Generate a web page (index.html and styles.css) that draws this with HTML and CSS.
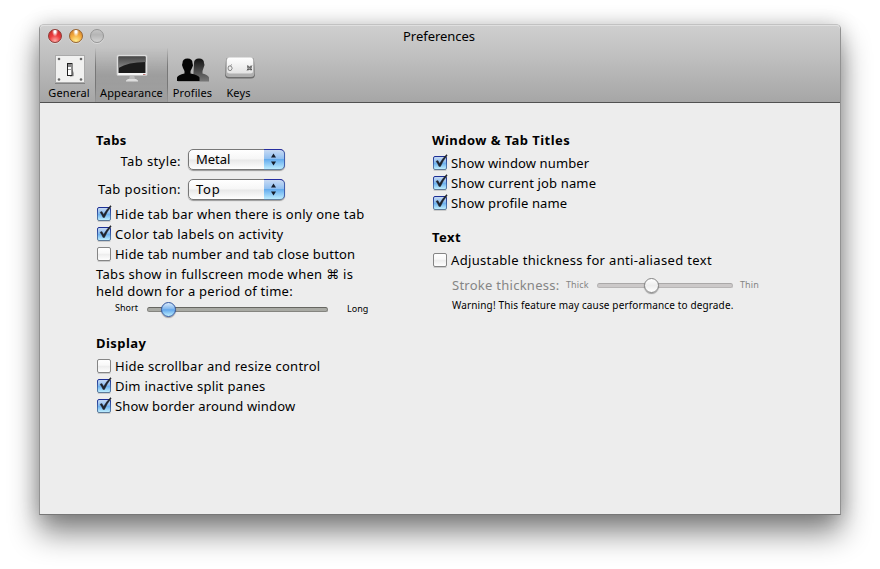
FILE: index.html
```html
<!DOCTYPE html>
<html lang="en">
<head>
<meta charset="utf-8">
<title>Preferences</title>
<link rel="stylesheet" href="styles.css">
</head>
<body>
<svg class="defs" width="0" height="0" aria-hidden="true">
  <defs>
    <linearGradient id="blue" x1="0" y1="0" x2="0" y2="1"><stop offset="0" stop-color="#cbdcf3"/><stop offset=".45" stop-color="#8bbdf0"/><stop offset=".5" stop-color="#68aeed"/><stop offset="1" stop-color="#c4f2ff"/></linearGradient>
    <linearGradient id="blueEdge" x1="0" y1="0" x2="0" y2="1"><stop offset="0" stop-color="#1d2f94"/><stop offset=".7" stop-color="#4771ad"/><stop offset="1" stop-color="#5e7a98"/></linearGradient>
    <linearGradient id="white" x1="0" y1="0" x2="0" y2="1"><stop offset="0" stop-color="#fff"/><stop offset=".45" stop-color="#f8f8f8"/><stop offset=".5" stop-color="#ececec"/><stop offset="1" stop-color="#fff"/></linearGradient>
    <linearGradient id="screen" x1="0" y1="0" x2="0" y2="1"><stop offset="0" stop-color="#484848"/><stop offset="1" stop-color="#858585"/></linearGradient>
    <linearGradient id="fade" x1="0" y1="0" x2="0" y2="1"><stop offset="0" stop-color="#111"/><stop offset="1" stop-color="#777"/></linearGradient>
    <linearGradient id="key" x1="0" y1="0" x2="0" y2="1"><stop offset="0" stop-color="#fff"/><stop offset="1" stop-color="#e3e3e3"/></linearGradient>
    <symbol id="on" viewBox="0 0 16 18">
      <rect x="1.5" y="15" width="13" height="2" rx="1" fill="#aaa" opacity=".5"/>
      <rect x="1.5" y="2.500" width="13" height="13" rx="1.500" fill="url(#blue)" stroke="url(#blueEdge)"/>
      <path d="M4 7.200 5.900 6.500 7.600 9.500Q10.500 4.500 14.500.500L15.200 1.500Q11 6.500 8.500 12.500H7Q5.800 9.500 4 7.200Z" fill="#20242c" stroke="#20242c" stroke-width=".4"/>
    </symbol>
    <symbol id="off" viewBox="0 0 16 18">
      <rect x="1.500" y="15" width="13" height="2" rx="1" fill="#aaa" opacity=".5"/>
      <rect x="1.500" y="2.500" width="13" height="13" rx="1.500" fill="url(#white)" stroke="#858585"/>
    </symbol>
  </defs>
</svg>
<main class="window">
  <header class="chrome">
    <div class="titlebar">
      <div class="lights"><i class="light red"></i><i class="light amber"></i><i class="light idle"></i></div>
      <h1 class="title">Preferences</h1>
    </div>
    <nav class="toolbar">
      <div class="tool general">
        <svg width="32" height="32" viewBox="0 0 32 32">
          <rect x="2" y="3" width="30" height="28" fill="#666" opacity=".6"/>
          <rect x="2.500" y="2.500" width="29" height="27" fill="#f1f1f0" stroke="#aaa"/>
          <g fill="#666"><circle cx="6" cy="6" r="1.300"/><circle cx="28" cy="6" r="1.300"/><circle cx="6" cy="26.500" r="1.300"/><circle cx="28" cy="26.500" r="1.300"/></g>
          <path d="M18 14 21 20V23L17 24Z" fill="#aaa"/>
          <rect x="14.500" y="10.500" width="4.500" height="12" fill="#fff" stroke="#222"/>
          <path d="M15 11H18.500V14H15Z" fill="#888"/><path d="M15 16.500H18.500" stroke="#999"/>
        </svg><span>General</span>
      </div>
      <div class="tool appearance">
        <svg width="32" height="32" viewBox="0 0 32 32">
          <path d="M14 22H18L19 26H13Z" fill="#bbb"/>
          <path d="M10 27.500 12 26H20L22 27.500V28.500H10Z" fill="#ddd"/>
          <rect x="1" y="2" width="30" height="20.500" rx="1" fill="#f5f5f5" stroke="#c5c5c5"/>
          <rect x="2.500" y="3.500" width="27" height="16.500" fill="#1b1b1b"/>
          <path d="M2.500 3.500H29.500V9Q12 9 2.500 15Z" fill="url(#screen)"/>
          <path d="M27 21.500H29.500" stroke="#b77"/>
        </svg><span>Appearance</span>
      </div>
      <div class="tool profiles">
        <svg width="34" height="32" viewBox="0 0 34 32">
          <path d="M2 28.500H33" stroke="#777" opacity=".5"/>
          <path d="M18 10Q18 5.500 23 5.500T28 10L28.500 12 27.500 15 26.500 18V20.500Q32 22 33 24.500V28H17Z" fill="url(#fade)"/>
          <path d="M6.500 10Q6.500 5.500 11.500 5.500T16.500 10L17 12.500 16 15 14.500 18V20.500Q22 22 23.500 24.500V28H1V24.500Q2 22 8.500 20.500V18L7 15 6 12Z" fill="#050505"/>
        </svg><span>Profiles</span>
      </div>
      <div class="tool keys">
        <svg width="32" height="32" viewBox="0 0 32 32">
          <path d="M3 7Q3 5 5 5H29Q31 5 31 7L32 21Q32 25.500 28 25.500H6Q2 25.500 2 21Z" fill="#6d6d6d"/>
          <path d="M3 7Q3 5 5 5H29Q31 5 31 7L31.500 20Q31.500 24 28 24H6Q2.500 24 2.500 20Z" fill="#b0b0b0"/>
          <rect x="4" y="4.500" width="26" height="16" rx="2.500" fill="url(#key)"/>
          <path d="M7.500 12.500Q8.500 12.500 8.500 11.500M8 13Q5 12 5 15T7 17.500H8Q10.500 15 8 13Z" fill="none" stroke="#888"/>
          <path d="M24 12.500 29 17M29 12.500 24 17.500M25 12.500V17.500M28 12.500V17.500M24 14H29M24 16.500H29" stroke="#555" stroke-width=".8"/>
        </svg><span>Keys</span>
      </div>
    </nav>
  </header>
  <div class="content">
    <section class="column left">
      <h2 class="head h-tabs">Tabs</h2>
      <div class="row popup-row style-row"><span class="label">Tab style:</span><div class="popup"><span class="value">Metal</span><span class="arrows"><svg width="20" height="19" viewBox="0 0 20 19"><path d="M7 7.500H12L9.500 3.500ZM7 11.500H12L9.500 15.500Z" fill="#151d2b"/></svg></span></div></div>
      <div class="row popup-row position-row"><span class="label">Tab position:</span><div class="popup"><span class="value top">Top</span><span class="arrows"><svg width="20" height="19" viewBox="0 0 20 19"><path d="M7 7.500H12L9.500 3.500ZM7 11.500H12L9.500 15.500Z" fill="#151d2b"/></svg></span></div></div>
      <div class="row check"><svg><use href="#on"/></svg><span class="t-hidebar">Hide tab bar when there is only one tab</span></div>
      <div class="row check"><svg><use href="#on"/></svg><span class="t-color">Color tab labels on activity</span></div>
      <div class="row check"><svg><use href="#off"/></svg><span class="t-number">Hide tab number and tab close button</span></div>
      <p class="note"><span class="t-note1">Tabs show in fullscreen mode when <span class="cmd">⌘</span> is</span><br><span class="t-note2">held down for a period of time:</span></p>
      <div class="row slider-row delay"><span class="mini short">Short</span><div class="track"><i class="knob"></i></div><span class="mini long">Long</span></div>
      <h2 class="head h-display">Display</h2>
      <div class="row check"><svg><use href="#off"/></svg><span class="t-scroll">Hide scrollbar and resize control</span></div>
      <div class="row check"><svg><use href="#on"/></svg><span class="t-dim">Dim inactive split panes</span></div>
      <div class="row check"><svg><use href="#on"/></svg><span class="t-border">Show border around window</span></div>
    </section>
    <section class="column right">
      <h2 class="head h-titles">Window &amp; Tab Titles</h2>
      <div class="row check"><svg><use href="#on"/></svg><span class="t-winnum">Show window number</span></div>
      <div class="row check"><svg><use href="#on"/></svg><span class="t-job">Show current job name</span></div>
      <div class="row check"><svg><use href="#on"/></svg><span class="t-profile">Show profile name</span></div>
      <h2 class="head h-text">Text</h2>
      <div class="row check"><svg><use href="#off"/></svg><span class="t-adjust">Adjustable thickness for anti-aliased text</span></div>
      <div class="row slider-row stroke"><span class="stroke-label">Stroke thickness:</span><span class="mini thick">Thick</span><div class="track"><i class="knob"></i></div><span class="mini thin">Thin</span></div>
      <p class="warning">Warning! This feature may cause performance to degrade.</p>
    </section>
  </div>
</main>
</body>
</html>
```
FILE: styles.css
```css
* { box-sizing: border-box; }
html, body { margin: 0; height: 569px; overflow: hidden; background: #fff; }
body {
  padding: 24px 39px;
  font: 13px/20px "Noto Sans", "DejaVu Sans", sans-serif;
  color: #000;
}
.defs { position: absolute; }
h1, h2, p { margin: 0; }
.window {
  width: 802px;
  height: 491px;
  border: 1px solid #929292;
  border-top-color: #c2c2c2;
  border-bottom-color: #777;
  border-radius: 5px 5px 0 0;
  background: #ededed;
  box-shadow: 0 18px 30px rgba(0, 0, 0, .48), 0 0 20px rgba(0, 0, 0, .18);
}
.chrome {
  height: 78px;
  border-bottom: 1px solid #515151;
  border-radius: 4px 4px 0 0;
  background: linear-gradient(#cfcfcf, #c4c4c4 30%, #a6a6a6);
  box-shadow: inset 0 1px #e0e0e0;
}
.titlebar { display: grid; grid-template-columns: 1fr auto 1fr; height: 23px; align-items: center; }
.lights { display: flex; gap: 7px; padding: 0 0 1px 8px; }
.light { width: 14px; height: 14px; border-radius: 50%; border: 1px solid #777; box-shadow: 0 1px rgba(255, 255, 255, .35); }
.red { border-color: #8f3934; background: radial-gradient(ellipse at 50% 12%, #fff 0 10%, transparent 35%), radial-gradient(circle at 50% 90%, #ffaaa5, #ed3e40 45%, #bd2527); }
.amber { border-color: #966330; background: radial-gradient(ellipse at 50% 12%, #fff 0 10%, transparent 35%), radial-gradient(circle at 50% 90%, #ffee90, #f4ab3e 50%, #c57423); }
.idle { border-color: #969696; background: linear-gradient(#c5c5c5, #b5b5b5 40%, #d2d2d2); }
.title { font-size: 13px; font-weight: 400; line-height: 23px; letter-spacing: -.03px; padding-right: 2px; }
.toolbar { display: flex; height: 54px; padding-left: 3px; }
.tool { display: flex; flex-direction: column; align-items: center; padding-top: 5px; font-size: 11px; line-height: 14px; letter-spacing: .12px; }
.tool svg { display: block; flex: none; }
.tool span { margin-top: 1px; white-space: nowrap; }
.general { width: 52px; }
.appearance {
  width: 73px;
  border: solid transparent;
  border-width: 0 1px;
  border-image: linear-gradient(rgba(80, 80, 80, 0), #777 35%, #777 70%, #999) 1;
  background: linear-gradient(rgba(0, 0, 0, 0), rgba(0, 0, 0, .13) 50%, rgba(0, 0, 0, .05));
}
.profiles { width: 49px; }
.keys { width: 43px; }
.content { display: flex; padding: 28px 0 0 56px; }
.column { display: flex; flex-direction: column; }
.left { width: 336px; }
.right { width: 340px; }
.head { font-size: 13px; line-height: 18px; font-weight: 700; letter-spacing: .45px; }
.head, .row span { white-space: nowrap; }
.row { display: flex; align-items: center; height: 20px; }
.popup-row { height: 22px; align-items: flex-start; }
.position-row { margin: 8px 0 3px; }
.label { width: 86px; margin-right: 6px; padding-right: 1px; display: flex; justify-content: flex-end; letter-spacing: .4px; }
.style-row .label { padding-top: 2px; }
.popup { display: flex; width: 97px; height: 21px; border: 1px solid #777; border-radius: 5px; background: linear-gradient(#fff, #f6f6f6 48%, #e8e8e8 52%, #fff); box-shadow: 0 1px 1px rgba(0, 0, 0, .35); }
.value { flex: 1; padding-left: 7px; line-height: 18px; }
.top { letter-spacing: .8px; }
.arrows { width: 21px; margin: -1px -1px -1px 0; height: 21px; border: 1px solid #405fae; border-top-color: #262ea0; border-bottom-color: #64809e; border-left: 0; border-radius: 0 5px 5px 0; background: linear-gradient(#c8daf3, #91c0f1 45%, #65aced 50%, #bcecff); }
.arrows svg { display: block; }
.check svg { width: 16px; height: 18px; flex: none; margin-right: 3px; }
.t-hidebar { letter-spacing: .22px; }
.t-color { letter-spacing: .28px; }
.t-number { letter-spacing: .2px; }
.t-note1 { letter-spacing: .3px; }
.t-note2 { letter-spacing: .25px; }
.t-scroll { letter-spacing: .27px; }
.t-dim { letter-spacing: .25px; }
.t-border { letter-spacing: .15px; }
.t-winnum { letter-spacing: .12px; }
.t-job { letter-spacing: .15px; }
.t-profile { letter-spacing: .13px; }
.t-adjust { letter-spacing: .34px; }
.note { line-height: 17px; padding-top: 2px; height: 36px; white-space: nowrap; }
.cmd { font-family: "DejaVu Sans", sans-serif; font-size: 13px; line-height: 1; }
.mini { font-size: 9px; line-height: 12px; }
.track { position: relative; height: 5px; border-radius: 3px; border: 1px solid #858580; border-top-color: #666661; background: #a9aaa4; }
.knob { position: absolute; top: -6px; left: 13px; width: 15px; height: 15px; border-radius: 50%; border: 1px solid #3156a0; background: linear-gradient(#d8e9fa, #83b8ef 45%, #62a7ec 52%, #bff0ff); box-shadow: 0 1px 1px rgba(0, 0, 0, .35); }
.delay { height: 18px; padding-left: 19px; }
.delay .short { width: 32px; margin-top: -2px; }
.delay .track { width: 181px; margin-right: 19px; }
.h-display { margin: 16px 0 4px; }
.h-titles { margin-bottom: 4px; }
.h-text { margin: 15px 0 4px; }
.stroke { height: 20px; margin-top: 5px; padding-left: 20px; color: #858585; }
.stroke-label { width: 114px; letter-spacing: .26px; }
.stroke .mini { letter-spacing: .12px; }
.stroke .thick { width: 31px; }
.stroke .track { width: 136px; margin-right: 7px; border-color: #b8b6b6; border-top-color: #aaa8a8; background: #ccc9c9; }
.stroke .knob { left: 46px; border-color: #858585; background: linear-gradient(#fff, #eee 50%, #fff); }
.warning { padding-left: 20px; font-size: 10px; line-height: 20px; letter-spacing: .14px; white-space: nowrap; }
```
